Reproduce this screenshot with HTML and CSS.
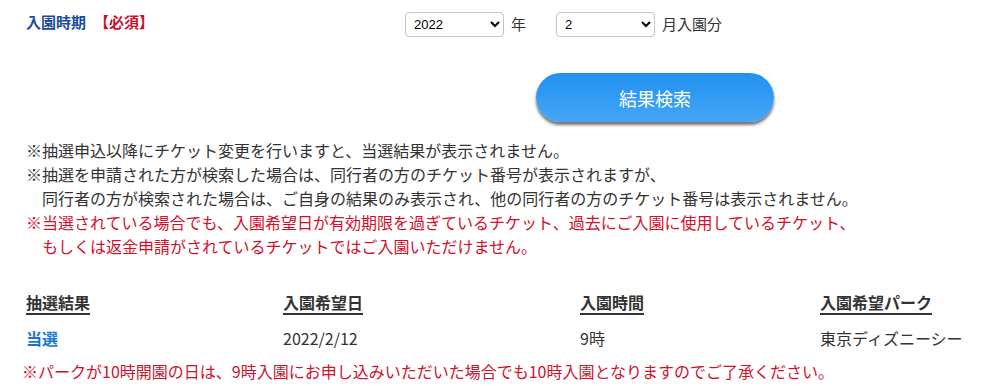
FILE: index.html
```html
<!DOCTYPE html>
<html lang="ja">

<head>
    <meta charset="UTF-8">
    <title>抽選結果確認</title>
    <link rel="stylesheet" href="styles.css">
</head>

<body>
    <div class="container">
        <div class="period-row">
            <div class="period-label">入園時期<span class="required">【必須】</span></div>
            <div class="period-fields">
                <select class="year-select" name="year">
                    <option>2021</option>
                    <option selected>2022</option>
                    <option>2023</option>
                </select>
                <span class="unit unit-year">年</span>
                <select class="month-select" name="month">
                    <option>1</option>
                    <option selected>2</option>
                    <option>3</option>
                </select>
                <span class="unit">月入園分</span>
            </div>
        </div>

        <div class="search-area">
            <button type="button" class="search-button">結果検索</button>
        </div>

        <div class="notes">
            <p>※抽選申込以降にチケット変更を行いますと、当選結果が表示されません。</p>
            <p>※抽選を申請された方が検索した場合は、同行者の方のチケット番号が表示されますが、</p>
            <p class="indent">同行者の方が検索された場合は、ご自身の結果のみ表示され、他の同行者の方のチケット番号は表示されません。</p>
            <p class="warn">※当選されている場合でも、入園希望日が有効期限を過ぎているチケット、過去にご入園に使用しているチケット、</p>
            <p class="warn indent">もしくは返金申請がされているチケットではご入園いただけません。</p>
        </div>

        <table class="result-table">
            <thead>
                <tr>
                    <th class="col-result">抽選結果</th>
                    <th class="col-date">入園希望日</th>
                    <th class="col-time">入園時間</th>
                    <th>入園希望パーク</th>
                </tr>
            </thead>
            <tbody>
                <tr>
                    <td class="win">当選</td>
                    <td>2022/2/12</td>
                    <td>9時</td>
                    <td>東京ディズニーシー</td>
                </tr>
            </tbody>
        </table>

        <p class="footnote">※パークが10時開園の日は、9時入園にお申し込みいただいた場合でも10時入園となりますのでご了承ください。</p>
    </div>
</body>

</html>
```

FILE: styles.css
```css
body {
    margin: 0;
    font-family: "Noto Sans CJK JP", "Noto Sans", sans-serif;
    font-size: 16px;
    color: #333;
    background-color: white;
}

.container {
    padding: 0 0 0 26px;
}

.period-row {
    display: flex;
    align-items: flex-start;
    padding-top: 12px;
    height: 25px;
}

.period-label {
    width: 379px;
    font-size: 15px;
    line-height: 20px;
    font-weight: bold;
    color: #1b4c9c;
}

.required {
    color: #c8102e;
    margin-left: 8px;
}

.period-fields {
    display: flex;
    align-items: center;
}

select {
    width: 99px;
    height: 25px;
    border: 1px solid #c4c4c4;
    border-radius: 4px;
    background-color: white;
    font-family: "Liberation Sans", Arial, sans-serif;
    font-size: 13px;
    color: #000;
    padding: 0 4px;
}

.unit {
    font-size: 15px;
    margin-left: 7px;
    margin-top: -3px;
    color: #333;
}

.unit-year {
    width: 45px;
}

.search-area {
    display: flex;
    padding: 36px 0 0 510px;
}

.search-button {
    width: 238px;
    height: 49px;
    border: none;
    border-radius: 25px;
    background: linear-gradient(to bottom, #2191f1, #45a6f5);
    box-shadow: 0 3px 3px rgba(0, 0, 0, 0.55);
    color: white;
    font-family: inherit;
    font-size: 18px;
}

.notes {
    margin-top: 16px;
}

.notes p {
    margin: 0;
    line-height: 24px;
}

.notes .indent {
    padding-left: 16px;
}

.warn {
    color: #d0112b;
}

.result-table {
    margin-top: 32px;
    border-collapse: collapse;
}

.result-table th,
.result-table td {
    padding: 0;
    text-align: left;
    line-height: 24px;
}

.result-table th {
    font-weight: bold;
    text-decoration: underline;
    text-decoration-thickness: 2px;
    text-underline-offset: 4px;
    padding-bottom: 12px;
}

.col-result {
    width: 257px;
}

.col-date {
    width: 297px;
}

.col-time {
    width: 240px;
}

.win {
    color: #1976d2;
    font-weight: bold;
}

.footnote {
    margin: 9px 0 0 -4px;
    color: #d0112b;
    line-height: 24px;
}
```
